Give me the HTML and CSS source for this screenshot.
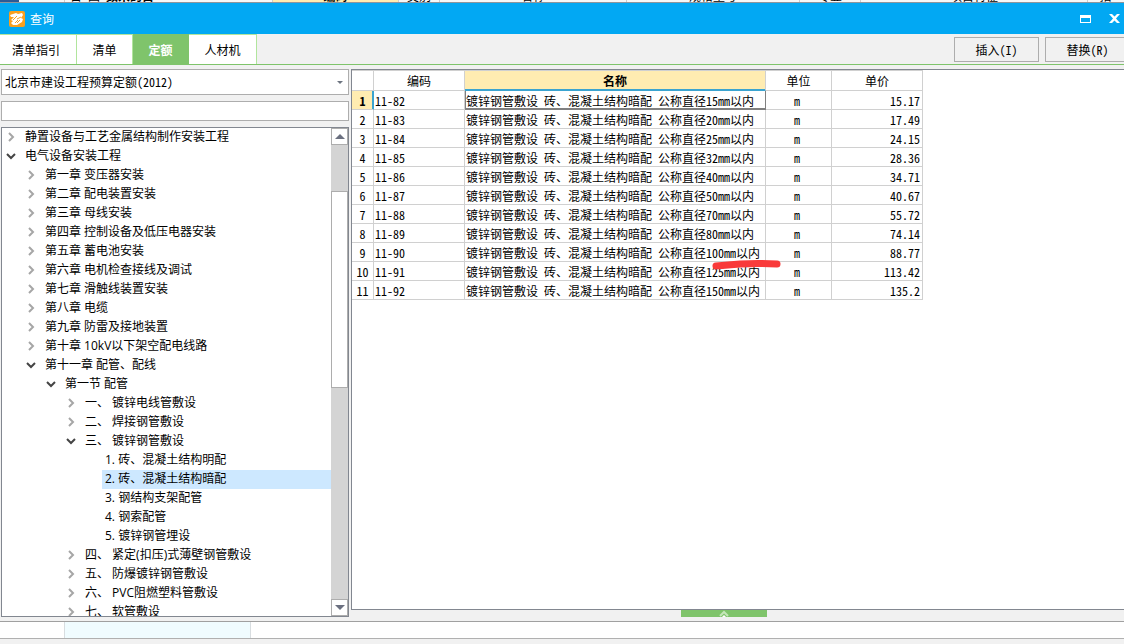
FILE: index.html
```html
<!DOCTYPE html>
<html lang="zh-CN">
<head>
<meta charset="utf-8">
<title>查询</title>
<link rel="stylesheet" href="styles.css">
</head>
<body>
<div class="backdrop-top" aria-hidden="true">
  <span class="bt-icons"></span><span class="bt-tools">日 国 <b>数来的目</b></span><span class="bt-code">编码</span><span class="bt-type">类别</span><span class="bt-name">名称</span><span class="bt-spec">规格型号</span><span class="bt-major">专业</span><span class="bt-feature">项目特征</span><span class="bt-last">指一行</span>
</div>
<header class="titlebar">
  <svg class="logo" viewBox="0 0 16 16"><rect width="16" height="16" rx="2" fill="#f9a01f"/><path d="M1 4l6-2 2 1 4-1 1 2-2 3 2 1-1 3-5 3-4 0-2-2 2-2-2-1 3-3-3 0z" fill="#fff"/><path d="M4 9l4-4M6 12l3-3M8 8l4-2M11 9l-3 3" stroke="#f9a01f" stroke-width="1"/></svg>
  <h1>查询</h1>
  <button class="win" aria-label="最大化"><svg width="11" height="8" viewBox="0 0 11 8"><path d="M0 0h11v8H0zM1 3v4h9V3z" fill="#fff" fill-rule="evenodd"/></svg></button>
  <button class="win" aria-label="关闭"><svg width="11" height="9" viewBox="0 0 11 9"><path d="M0 0h3l2.500 2.500L8 0h3L7 4.500 11 9H8L5.500 6.500 3 9H0l4-4.500z" fill="#fff"/></svg></button>
</header>
<nav class="toolbar">
  <button class="tab tab-wide">清单指引</button><button class="tab">清单</button><button class="tab active">定额</button><button class="tab tab-end">人材机</button>
  <span class="spacer"></span>
  <button class="action">插入(I)</button><button class="action action-last">替换(R)</button>
</nav>
<main class="content">
  <aside class="side">
    <div class="combo"><select aria-label="定额库"><option>北京市建设工程预算定额(2012)</option></select><i></i></div>
    <input class="search" type="text" aria-label="搜索">
    <div class="tree">
      <ul id="tree"></ul>
      <div class="scroll"><div class="sb-btn up"></div><div class="sb-before"></div><div class="thumb"></div><div class="sb-after"></div><div class="sb-btn down"></div></div>
    </div>
  </aside>
  <section class="result">
    <div class="grid">
      <table>
        <colgroup><col class="c-no"><col class="c-code"><col class="c-name"><col class="c-unit"><col class="c-price"></colgroup>
        <thead><tr><th></th><th>编码</th><th class="current">名称</th><th>单位</th><th>单价</th></tr></thead>
        <tbody id="rows"></tbody>
      </table>
      <svg class="mark" viewBox="0 0 70 10"><path d="M4 6Q16 5 28 4Q46 3 65 4" fill="none" stroke="#f93a3a" stroke-width="7" stroke-linecap="round"/></svg>
    </div>
    <button class="expand" aria-label="展开"><svg width="10" height="7" viewBox="0 0 10 7"><path d="M1 6l4-4 4 4" fill="none" stroke="#c5e6b9" stroke-width="2"/><path d="M3 7l2-2 2 2z" fill="#fff"/></svg></button>
  </section>
</main>
<footer class="backdrop-bottom"><div class="bb-row"><span></span></div><div class="bb-grey"></div></footer>
<script src="app.js"></script>
</body>
</html>
```
FILE: styles.css
```css
* { box-sizing: border-box; }
body {
  margin: 0; height: 100vh; overflow: hidden;
  display: flex; flex-direction: column;
  background: #f1f1f1; color: #000;
  font: 12px/18px "Noto Sans CJK SC", sans-serif;
  font-feature-settings: "hwid";
}
button, select, input { font: inherit; font-feature-settings: inherit; color: inherit; border-radius: 0; margin: 0; padding: 0; }
h1, ul { margin: 0; padding: 0; font-weight: normal; }
svg { display: block; }

.backdrop-top {
  flex: none; display: flex; align-items: flex-end; height: 3px; overflow: hidden;
  background: #f7f7f7; border-bottom: 1px solid #8e959c; line-height: 16px;
}
.backdrop-top span { flex: none; height: 14px; text-align: center; border-right: 1px solid #ccc; }
.backdrop-top .bt-icons { width: 65px; background: linear-gradient(90deg, #2c5a96 19px, #f7f7f7 19px); }
.backdrop-top .bt-tools { width: 208px; text-align: left; padding-left: 5px; }
.backdrop-top .bt-code { width: 126px; background: #ffecb1; font-weight: bold; }
.backdrop-top .bt-type { width: 41px; }
.backdrop-top .bt-name { width: 187px; }
.backdrop-top .bt-spec { width: 173px; }
.backdrop-top .bt-major { width: 61px; }
.backdrop-top .bt-feature { width: 227px; }
.backdrop-top .bt-last { width: 60px; }

.titlebar { flex: none; display: flex; align-items: center; height: 31px; padding: 0 0 0 9px; background: #02a8f3; color: #fff; }
.logo { width: 16px; height: 16px; margin-right: 5px; }
.titlebar h1 { flex: 1; font-size: 12px; }
.win { display: flex; align-items: center; justify-content: center; width: 19px; height: 24px; background: none; border: 0; margin-left: 10px; }

.toolbar { flex: none; display: flex; height: 31px; border-bottom: 1px solid #7fc46b; overflow: hidden; }
.tab { flex: none; width: 56px; background: #fff; border: 0 solid #b1e59d; border-width: 1px 1px 0 0; }
.tab-wide { width: 77px; padding-right: 4px; }
.tab-end { width: 68px; }
.tab.active { background: #7fc46b; border-color: #7fc46b; color: #fff; font-weight: bold; }
.spacer { flex: 1; }
.action { flex: none; width: 85px; height: 25px; margin-top: 3px; background: #f1f1f1; border: 1px solid #adadad; }
.action-last { margin-left: 6px; margin-right: -6px; }

.content { flex: 1; min-height: 0; display: flex; gap: 2px; padding: 4px 0 4px 1px; }
.side { flex: none; width: 348px; display: flex; flex-direction: column; }
.combo { position: relative; height: 26px; margin-bottom: 6px; }
.combo select { width: 100%; height: 26px; appearance: none; background: #fff; border: 1px solid #adadad; padding: 0 18px 0 3px; }
.combo i { position: absolute; right: 6px; top: 12px; border: 3px solid transparent; border-top-color: #6d7480; border-bottom: 0; }
.search { height: 20px; margin-bottom: 6px; background: #fff; border: 1px solid #adadad; }
.tree { flex: 1; min-height: 0; display: flex; border: 1px solid #828790; background: #fff; font-family: "Open Sans", "Noto Sans CJK SC", sans-serif; font-feature-settings: normal; }
.tree ul { flex: 1; overflow: hidden; list-style: none; }
.node { display: flex; align-items: center; height: 19px; white-space: pre; }
.node svg { flex: none; width: 11px; height: 11px; margin: 0 8px 2px 3px; fill: none; stroke: #a6a6a6; stroke-width: 2; }
.node .open { stroke: #444; }
.node span { flex: 1; line-height: 17px; padding-bottom: 2px; }
.l0 span, .l1 span, .l2 span, .l3 span { padding-left: 1px; }
.l1 { padding-left: 20px; }
.l2 { padding-left: 40px; }
.l3 { padding-left: 60px; }
.l4 { padding-left: 100px; }
.l4 span { padding-left: 3px; }
.selected span { background: #cde8ff; }
.scroll { flex: none; width: 17px; display: flex; flex-direction: column; background: #d4d4d4; }
.sb-btn { flex: none; height: 17px; background: #fff; border: 1px solid #adadad; display: flex; align-items: center; justify-content: center; }
.sb-btn::before { content: ""; border: 5px solid transparent; }
.up::before { border-bottom-color: #6b7080; border-top: 0; }
.down::before { border-top-color: #6b7080; border-bottom: 0; }
.sb-before { flex: 46; }
.thumb { flex: 196; background: #fff; border: 1px solid #adadad; }
.sb-after { flex: 212; }

.result { flex: 1; min-width: 0; display: flex; flex-direction: column; align-items: center; }
.grid { position: relative; width: 100%; flex: 1; min-height: 0; background: #fff; border: 1px solid #828790; border-right: 0; overflow: hidden; }
table { border-collapse: separate; border-spacing: 0; table-layout: fixed; width: 571px; }
.c-no { width: 22px; }
.c-code { width: 91px; }
.c-name { width: 301px; }
.c-unit { width: 66px; }
.c-price { width: 91px; }
th, td { height: 19px; padding: 2px 2px 0 1px; border: 0 solid #d0d0d0; border-width: 0 1px 1px 0; font-weight: normal; line-height: 16px; white-space: nowrap; overflow: hidden; }
thead th { height: 21px; padding: 0 2px; border-top-width: 1px; line-height: 19px; }
thead .current { background: #ffecb1; font-weight: bold; border-bottom-color: #3ba4d0; box-shadow: inset 0 -1px #3ba4d0; }
tbody th { padding: 2px 0 0; }
tbody .current { background: #ffecb1; font-weight: bold; border-right-color: #3ba4d0; box-shadow: inset -1px 0 #3ba4d0; }
td:nth-child(4) { text-align: center; padding-right: 4px; }
td:nth-child(5) { text-align: right; }
td.focus { border-color: #808080; box-shadow: inset 1px 0 #808080, inset 0 -1px #808080; }
.mark { position: absolute; left: 360px; top: 190px; width: 70px; height: 10px; }
.expand { width: 86px; height: 7px; border: 0; background: #7fc46b; display: flex; justify-content: center; margin-right: 27px; }

.backdrop-bottom { flex: none; border-top: 1px solid #a0a0a0; }
.bb-row { height: 17px; display: flex; padding-left: 64px; background: #fff; border-bottom: 1px solid #b0b0b0; }
.bb-row span { width: 187px; background: #f0fcff; border: 0 solid #d8dde0; border-width: 0 1px; }
.bb-grey { height: 5px; }
```
FILE: app.js
```js
const nodes = [
  [0, '>', '静置设备与工艺金属结构制作安装工程'],
  [0, 'v', '电气设备安装工程'],
  [1, '>', '第一章 变压器安装'],
  [1, '>', '第二章 配电装置安装'],
  [1, '>', '第三章 母线安装'],
  [1, '>', '第四章 控制设备及低压电器安装'],
  [1, '>', '第五章 蓄电池安装'],
  [1, '>', '第六章 电机检查接线及调试'],
  [1, '>', '第七章 滑触线装置安装'],
  [1, '>', '第八章 电缆'],
  [1, '>', '第九章 防雷及接地装置'],
  [1, '>', '第十章 10kV以下架空配电线路'],
  [1, 'v', '第十一章 配管、配线'],
  [2, 'v', '第一节 配管'],
  [3, '>', '一、 镀锌电线管敷设'],
  [3, '>', '二、 焊接钢管敷设'],
  [3, 'v', '三、 镀锌钢管敷设'],
  [4, '', '1. 砖、混凝土结构明配'],
  [4, '', '2. 砖、混凝土结构暗配'],
  [4, '', '3. 钢结构支架配管'],
  [4, '', '4. 钢索配管'],
  [4, '', '5. 镀锌钢管埋设'],
  [3, '>', '四、 紧定(扣压)式薄壁钢管敷设'],
  [3, '>', '五、 防爆镀锌钢管敷设'],
  [3, '>', '六、 PVC阻燃塑料管敷设'],
  [3, '>', '七、 软管敷设']
];
const arrows = {
  '>': '<svg viewBox="0 0 11 11"><path d="M4 2l4 4-4 4"/></svg>',
  'v': '<svg class="open" viewBox="0 0 11 11"><path d="M2 4l4 4 4-4"/></svg>',
  '': ''
};
document.getElementById('tree').innerHTML = nodes.map(([level, state, text]) =>
  `<li class="node l${level}${text.startsWith('2.') ? ' selected' : ''}">${arrows[state]}<span>${text}</span></li>`
).join('');

const sizes = [15, 20, 25, 32, 40, 50, 70, 80, 100, 125, 150];
const prices = ['15.17', '17.49', '24.15', '28.36', '34.71', '40.67', '55.72', '74.14', '88.77', '113.42', '135.2'];
document.getElementById('rows').innerHTML = sizes.map((size, i) =>
  `<tr><th${i ? '' : ' class="current"'}>${i + 1}</th><td>11-${82 + i}</td>` +
  `<td${i ? '' : ' class="focus"'}>镀锌钢管敷设 砖、混凝土结构暗配 公称直径${size}mm以内</td><td>m</td><td>${prices[i]}</td></tr>`
).join('');
```
